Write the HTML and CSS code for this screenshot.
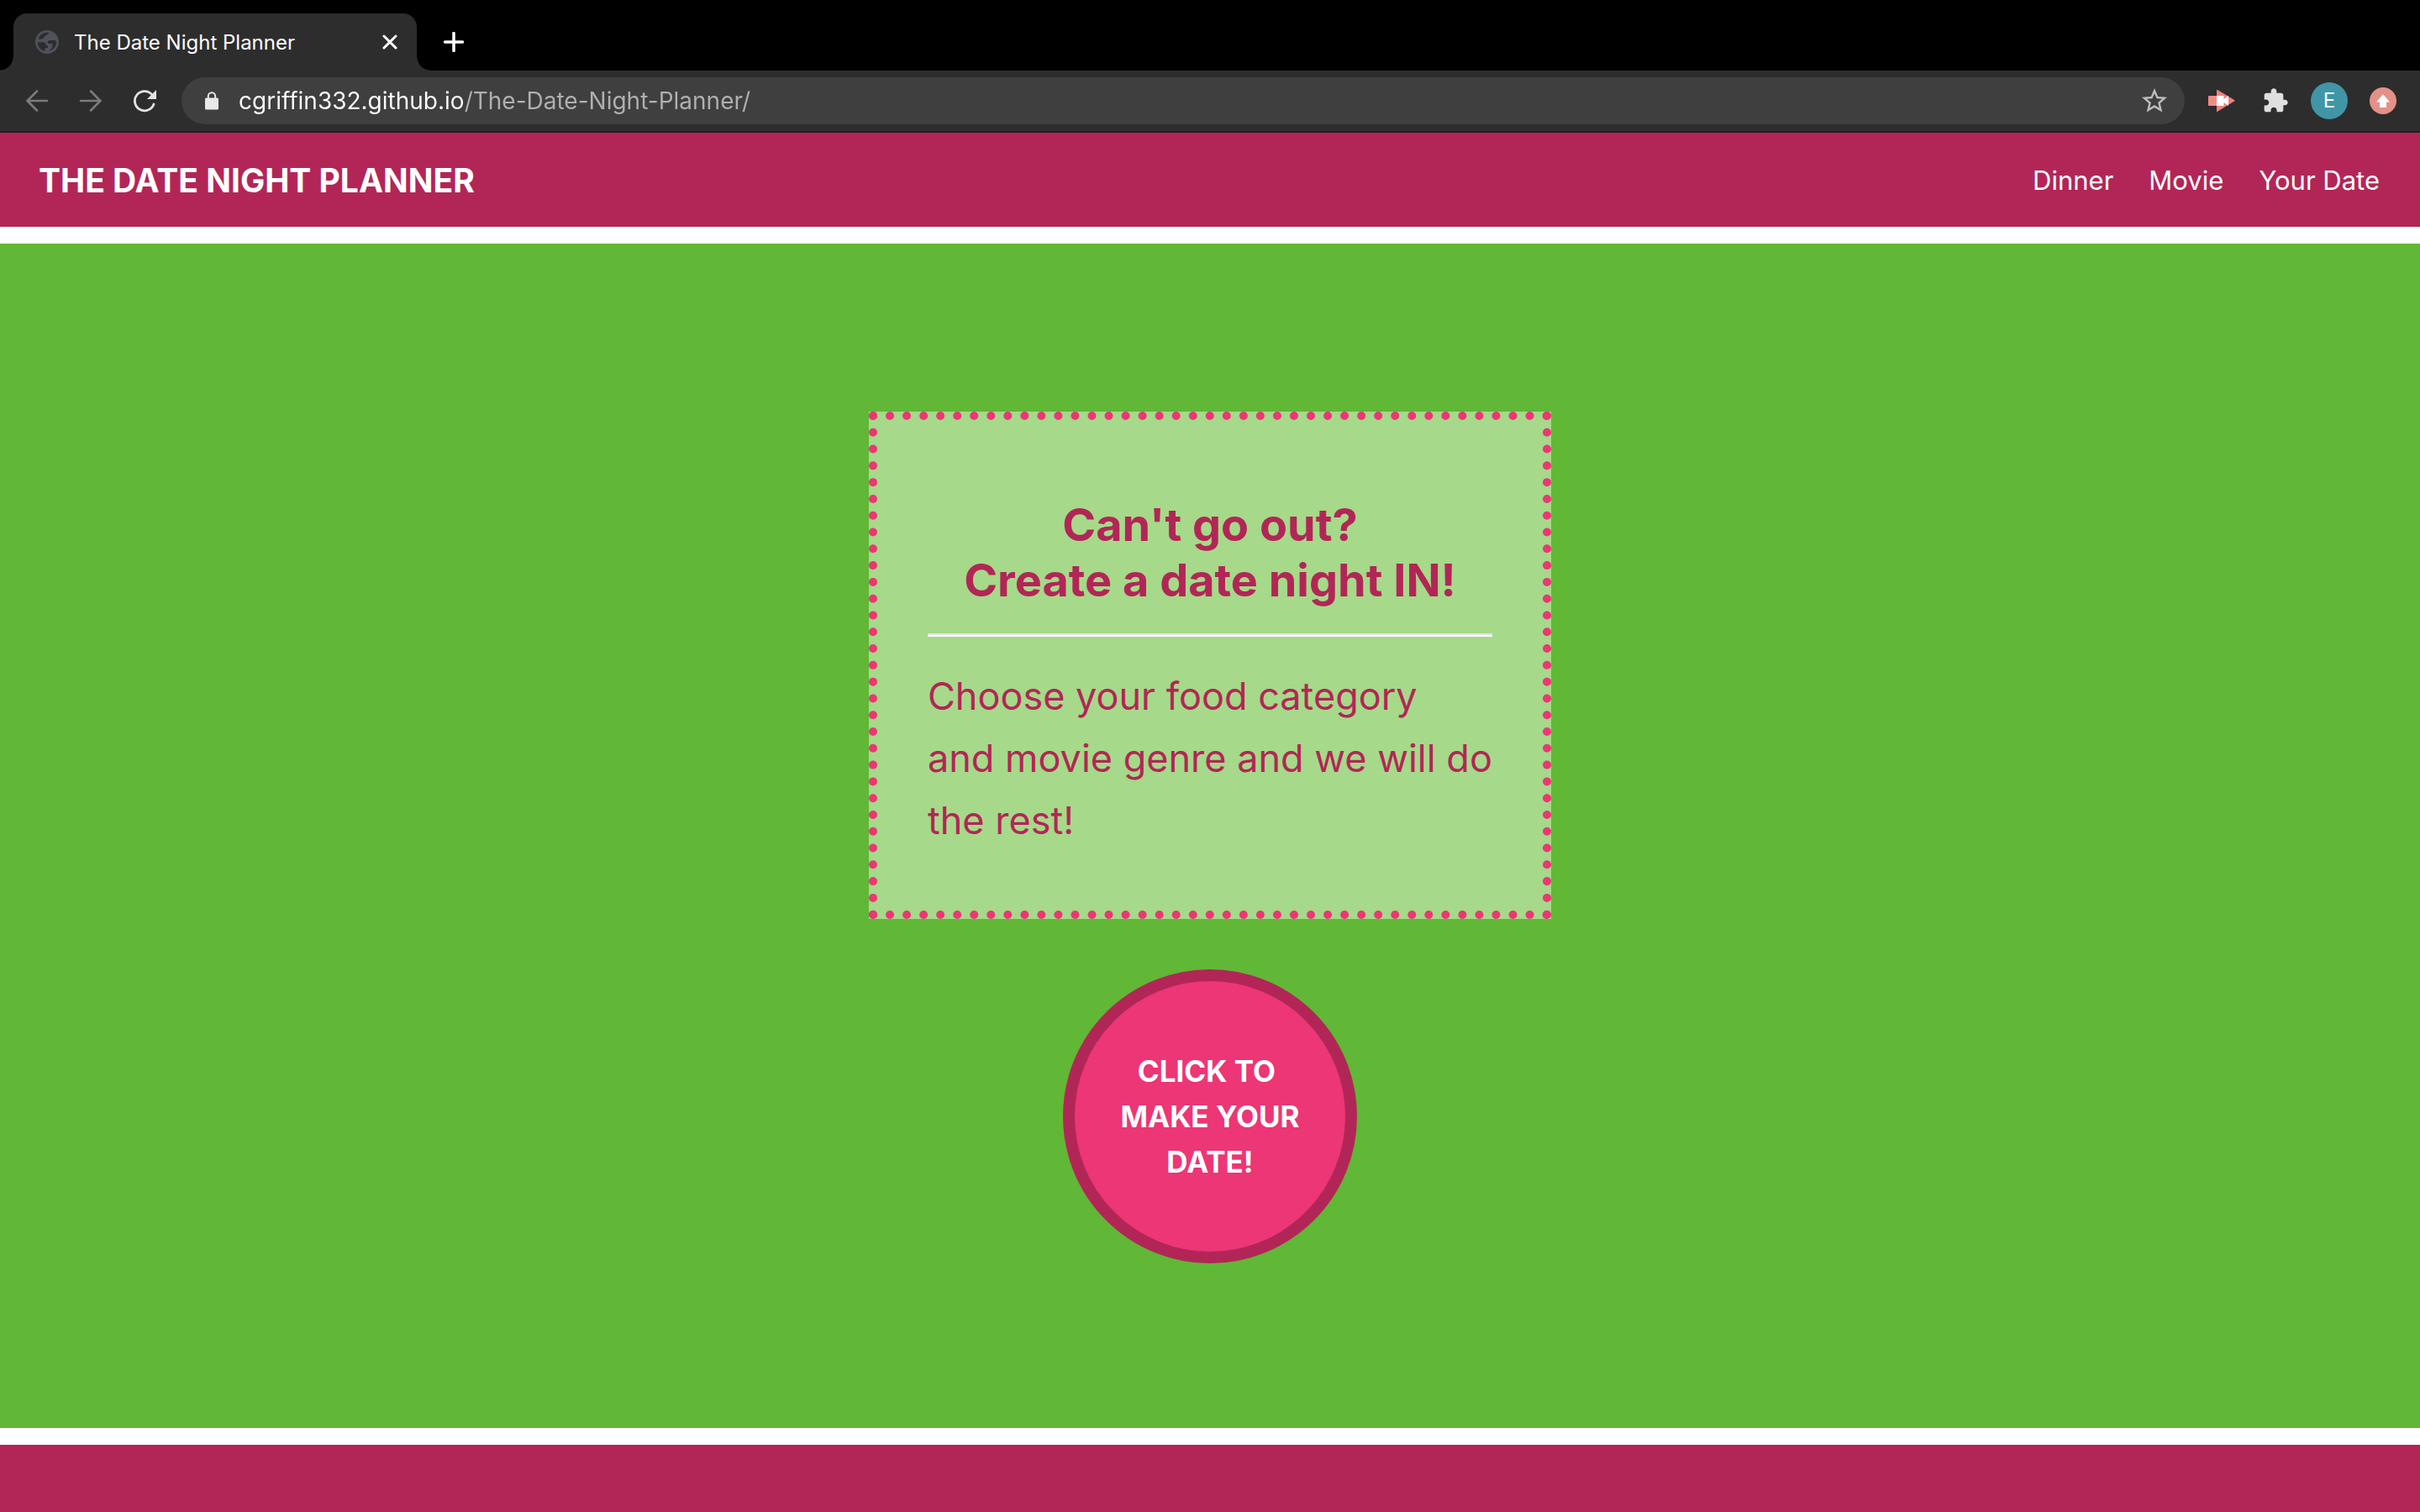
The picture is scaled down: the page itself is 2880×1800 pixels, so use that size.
FILE: index.html
```html
<!DOCTYPE html>
<html lang="en">
<head>
<meta charset="utf-8">
<meta name="viewport" content="width=device-width, initial-scale=1">
<title>The Date Night Planner</title>
<link rel="stylesheet" href="styles.css">
</head>
<body>
<div class="browser">
  <div class="tab-strip">
    <div class="tab">
      <svg class="tab-icon" viewBox="2 2 20 20" aria-hidden="true"><path fill="#50525b" d="M12 2C6.480 2 2 6.480 2 12s4.480 10 10 10 10-4.480 10-10S17.520 2 12 2zM4 12.200L8.600 12.200C10.600 12.200 11 13.800 11.200 15.100L12.700 15.100V17L10.200 17.200V19.800C6.500 19.100 4 16 4 12.200zM13.500 4.100C10 3.500 6.500 5 5 8.200C4.500 9.300 5 9.800 6 9.800C8 9.700 9.500 8.500 9.800 7.500C10.200 6.200 13 6.200 13.500 4.100zM20 12.500C20 15.500 17.500 18.500 14 19.600C14.800 17.500 16.500 17.600 16.500 15.500V13.500H14C12.500 13.500 12 11 14.200 10.600H18C19.500 10.600 20 11.500 20 12.500z" fill-rule="evenodd"/></svg>
      <span class="tab-title">The Date Night Planner</span>
      <button class="icon-button tab-close" type="button" aria-label="Close tab"><svg width="18" height="18" viewBox="0 0 18 18"><path d="M2 2 16 16M16 2 2 16" stroke="#fff" stroke-width="3" stroke-linecap="round"/></svg></button>
    </div>
    <button class="icon-button tab-new" type="button" aria-label="New tab"><svg width="24" height="24" viewBox="0 0 24 24"><path d="M12 1.500V22.500M1.500 12H22.500" stroke="#fff" stroke-width="3.500" stroke-linecap="round"/></svg></button>
  </div>
  <div class="toolbar">
    <div class="tools">
      <button class="icon-button" type="button" aria-label="Back"><svg width="28" height="28" viewBox="0 0 28 28"><path d="M26 14H3M14 2.500 2.500 14 14 25.500" fill="none" stroke="#7b7b7b" stroke-width="2.600" stroke-linecap="round"/></svg></button>
      <button class="icon-button" type="button" aria-label="Forward"><svg width="28" height="28" viewBox="0 0 28 28"><path d="M2 14H25M14 2.500 25.500 14 14 25.500" fill="none" stroke="#7b7b7b" stroke-width="2.600" stroke-linecap="round"/></svg></button>
      <button class="icon-button" type="button" aria-label="Reload"><svg width="28" height="28" viewBox="0 0 28 28"><path d="M25 18A11.600 11.600 0 1 1 23 6.800" fill="none" stroke="#e2e3e3" stroke-width="2.800" stroke-linecap="round"/><path d="M28 1V12H17z" fill="#e2e3e3"/></svg></button>
    </div>
    <div class="address">
      <svg class="lock" width="16" height="22" viewBox="0 0 16 22" aria-hidden="true"><path d="M3.800 9V5.400a4.200 4.200 0 0 1 8.400 0V9" fill="none" stroke="#e8e8e8" stroke-width="2"/><rect y="7.500" width="16" height="14" rx="1.500" fill="#e8e8e8"/></svg>
      <input class="url" type="text" aria-label="Address" value="cgriffin332.github.io/The-Date-Night-Planner/" spellcheck="false">
      <button class="icon-button star" type="button" aria-label="Bookmark this page"><svg width="36" height="36" viewBox="0 0 24 24"><path fill="#bdbdbd" d="M22 9.240l-7.190-.62L12 2 9.190 8.630 2 9.240l5.460 4.730L5.820 21 12 17.270 18.180 21l-1.630-7.030L22 9.240zM12 15.400l-3.760 2.270 1-4.280-3.320-2.880 4.380-.38L12 6.100l1.710 4.040 4.380.38-3.320 2.880 1 4.280L12 15.400z"/></svg></button>
    </div>
    <div class="tools">
      <button class="icon-button" type="button" aria-label="Video extension"><svg width="32" height="28" viewBox="0 0 32 28"><path d="M1 8H10V20H1a1 1 0 0 1-1-1V9a1 1 0 0 1 1-1z" fill="#f28b87"/><path d="M10 1.500Q10 .5 11 1L31 13Q32 13.700 31 14.500L11 26.700Q10 27.200 10 26.500z" fill="#ee827e"/><path d="M10 8H17.500Q18.500 8 18.500 9V12L24 8V20L18.500 16V19Q18.500 20 17.500 20H10z" fill="#fff"/></svg></button>
      <button class="icon-button" type="button" aria-label="Extensions"><svg width="32" height="32" viewBox="0 0 24 24"><path fill="#dfdfdf" d="M20.500 11H19V7c0-1.100-.9-2-2-2h-4V3.500C13 2.120 11.880 1 10.500 1S8 2.120 8 3.500V5H4c-1.100 0-1.990.9-1.990 2v3.800H3.500c1.490 0 2.700 1.210 2.700 2.700s-1.210 2.700-2.700 2.700H2V20c0 1.100.9 2 2 2h3.800v-1.500c0-1.490 1.210-2.700 2.700-2.700 1.490 0 2.700 1.210 2.700 2.700V22H17c1.100 0 2-.9 2-2v-4h1.500c1.380 0 2.500-1.120 2.500-2.500S21.880 11 20.500 11z"/></svg></button>
      <button class="icon-button" type="button" aria-label="Profile"><span class="avatar">E</span></button>
      <button class="icon-button" type="button" aria-label="Update"><svg width="32" height="32" viewBox="0 0 32 32"><circle cx="16" cy="16" r="16" fill="#e59086"/><path d="M16 8.300 24 17.500H20V24H12V17.500H8z" fill="#fff"/></svg></button>
    </div>
  </div>
</div>
<header class="site-header">
  <h1 class="site-title">THE DATE NIGHT PLANNER</h1>
  <nav class="site-nav">
    <a href="#dinner">Dinner</a>
    <a href="#movie">Movie</a>
    <a href="#date">Your Date</a>
  </nav>
</header>
<main class="hero">
  <section class="card">
    <h2 class="card-title">Can't go out?<br>Create a date night IN!</h2>
    <hr class="card-rule">
    <p class="card-text">Choose your food category and movie genre and we will do the rest!</p>
  </section>
  <button class="cta" type="button">CLICK TO&nbsp;<br>MAKE YOUR<br>DATE!</button>
</main>
<footer class="site-footer"></footer>
</body>
</html>
```
FILE: styles.css
```css
* { box-sizing: border-box; }

body {
  margin: 0;
  min-height: 100vh;
  display: flex;
  flex-direction: column;
  background: #fff;
  font-family: Inter, "Liberation Sans", sans-serif;
}

button, input { font: inherit; }

h1, h2, p { margin: 0; }

/* Browser frame */
.browser {
  background: #2d2d2d;
  border-bottom: 2px solid #202021;
}

.tab-strip {
  display: flex;
  align-items: flex-end;
  padding: 16px 16px 0;
  background: #000;
}

.tab {
  position: relative;
  display: flex;
  align-items: center;
  width: 480px;
  height: 68px;
  padding: 0 12px 0 26px;
  border-radius: 16px 16px 0 0;
  background: #2d2d2d;
}

.tab::before,
.tab::after {
  content: "";
  position: absolute;
  bottom: 0;
  width: 16px;
  height: 16px;
}

.tab::before {
  right: 100%;
  background: radial-gradient(circle at 0 0, #000 15px, #2d2d2d 16px);
}

.tab::after {
  left: 100%;
  background: radial-gradient(circle at 100% 0, #000 15px, #2d2d2d 16px);
}

.tab-icon {
  width: 28px;
  height: 28px;
  margin-right: 18px;
}

.tab-title {
  flex: 1;
  color: #fff;
  font-size: 24px;
  white-space: nowrap;
}

.icon-button {
  display: flex;
  align-items: center;
  justify-content: center;
  width: 64px;
  height: 56px;
  padding: 0;
  border: 0;
  background: none;
}

.tab-close { width: 40px; }

.tab-new {
  height: 68px;
  margin-left: 12px;
}

.toolbar {
  display: flex;
  align-items: center;
  gap: 12px;
  padding: 8px 12px;
}

.tools { display: flex; }

.address {
  flex: 1;
  display: flex;
  align-items: center;
  height: 56px;
  padding: 0 4px 0 28px;
  border-radius: 28px;
  background: #3f3f3f;
}

.lock { margin-right: 24px; }

.url {
  flex: 1;
  min-width: 0;
  height: 56px;
  padding: 0;
  border: 0;
  outline: 0;
  font-size: 28px;
  /* host in white, path in grey */
  background: linear-gradient(to right, #fff 269px, #b0b0b0 269px);
  background-clip: text;
  -webkit-background-clip: text;
  -webkit-text-fill-color: transparent;
}

.avatar {
  width: 44px;
  height: 44px;
  border-radius: 50%;
  background: #4095a7;
  color: #fff;
  font-size: 24px;
  line-height: 44px;
}

/* Site */
.site-header {
  display: flex;
  align-items: center;
  justify-content: space-between;
  min-height: 112px;
  padding: 0 48px 0 46px;
  background: #b22657;
  color: #fff;
}

.site-title {
  font-size: 39px;
  font-weight: 700;
}

.site-nav {
  display: flex;
  gap: 42px;
  font-size: 31px;
}

.site-nav a {
  color: inherit;
  text-decoration: none;
}

.hero {
  flex: 1;
  display: flex;
  flex-direction: column;
  align-items: center;
  gap: 60px;
  margin: 20px 0;
  padding: 200px 40px 196px;
  background: #61b736;
}

.card {
  width: 812px;
  max-width: 100%;
  padding: 92px 60px 70px;
  border: 10px dotted #ec3675;
  background: #a6d989;
  color: #b22657;
}

.card-title {
  font-size: 54px;
  font-weight: 700;
  line-height: 66px;
  text-align: center;
}

.card-rule {
  height: 4px;
  margin: 30px 0 34px;
  border: 0;
  border-top: 2px solid #e5e5e5;
  background: #fff;
}

.card-text {
  font-size: 45px;
  line-height: 74px;
}

.cta {
  width: 350px;
  height: 350px;
  padding: 0;
  border: 14px solid #b22657;
  border-radius: 50%;
  background: #ec3675;
  color: #fff;
  font-size: 35px;
  font-weight: 700;
  line-height: 54px;
}

.site-footer {
  min-height: 80px;
  background: #b22657;
}
```
